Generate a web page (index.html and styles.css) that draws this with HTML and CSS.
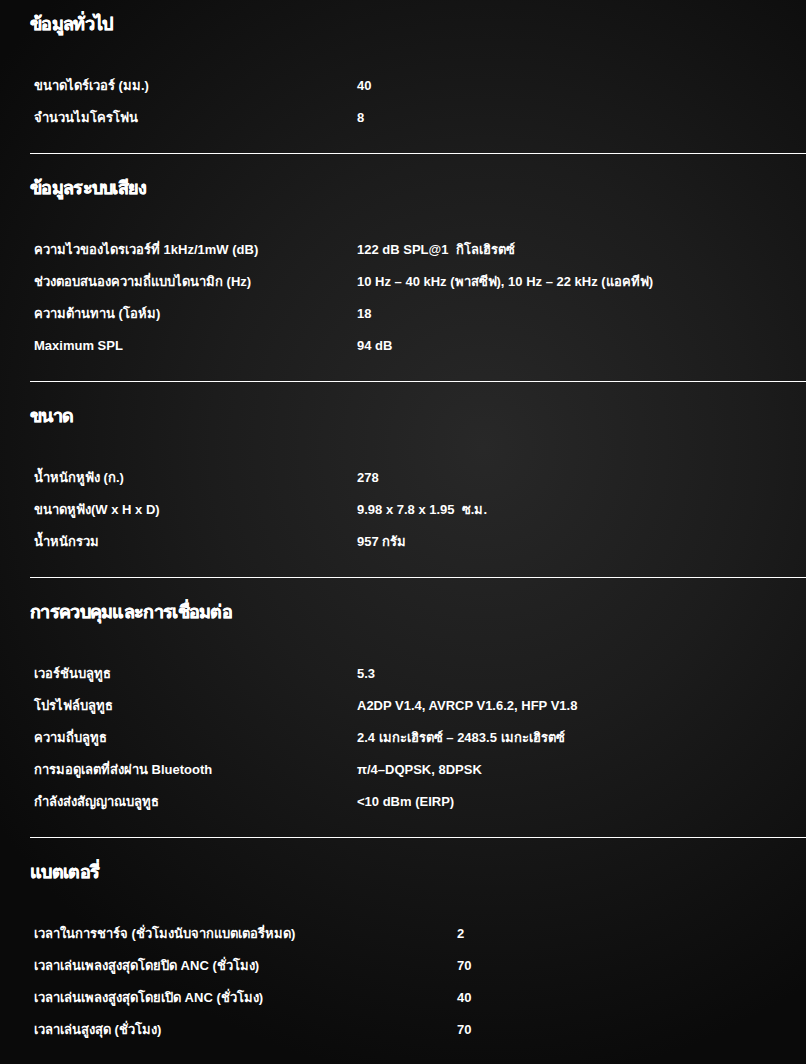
FILE: index.html
```html
<!DOCTYPE html>
<html lang="th">
<head>
    <meta charset="UTF-8">
    <meta name="viewport" content="width=device-width, initial-scale=1.0">
    <title>ข้อมูลจำเพาะ</title>
    <link rel="stylesheet" href="styles.css">
</head>
<body>
    <div class="specs">

        <!-- ข้อมูลทั่วไป -->
        <div class="spec-section">
            <h2>ข้อมูลทั่วไป</h2>
            <div class="spec-list">
                <div class="spec-row"><span class="label">ขนาดไดร์เวอร์ (มม.)</span><span class="value">40</span></div>
                <div class="spec-row"><span class="label">จำนวนไมโครโฟน</span><span class="value">8</span></div>
            </div>
        </div>

        <!-- ข้อมูลระบบเสียง -->
        <div class="spec-section">
            <h2>ข้อมูลระบบเสียง</h2>
            <div class="spec-list">
                <div class="spec-row"><span class="label">ความไวของไดรเวอร์ที่ 1kHz/1mW (dB)</span><span class="value">122 dB SPL@1&nbsp; กิโลเฮิรตซ์</span></div>
                <div class="spec-row"><span class="label">ช่วงตอบสนองความถี่แบบไดนามิก (Hz)</span><span class="value">10 Hz – 40 kHz (พาสซีฟ), 10 Hz – 22 kHz (แอคทีฟ)</span></div>
                <div class="spec-row"><span class="label">ความต้านทาน (โอห์ม)</span><span class="value">18</span></div>
                <div class="spec-row"><span class="label">Maximum SPL</span><span class="value">94 dB</span></div>
            </div>
        </div>

        <!-- ขนาด -->
        <div class="spec-section">
            <h2>ขนาด</h2>
            <div class="spec-list">
                <div class="spec-row"><span class="label">น้ำหนักหูฟัง (ก.)</span><span class="value">278</span></div>
                <div class="spec-row"><span class="label">ขนาดหูฟัง(W x H x D)</span><span class="value">9.98 x 7.8 x 1.95&nbsp; ซ.ม.</span></div>
                <div class="spec-row"><span class="label">น้ำหนักรวม</span><span class="value">957 กรัม</span></div>
            </div>
        </div>

        <!-- การควบคุมและการเชื่อมต่อ -->
        <div class="spec-section">
            <h2>การควบคุมและการเชื่อมต่อ</h2>
            <div class="spec-list">
                <div class="spec-row"><span class="label">เวอร์ชันบลูทูธ</span><span class="value">5.3</span></div>
                <div class="spec-row"><span class="label">โปรไฟล์บลูทูธ</span><span class="value">A2DP V1.4, AVRCP V1.6.2, HFP V1.8</span></div>
                <div class="spec-row"><span class="label">ความถี่บลูทูธ</span><span class="value">2.4 เมกะเฮิรตซ์ – 2483.5 เมกะเฮิรตซ์</span></div>
                <div class="spec-row"><span class="label">การมอดูเลตที่ส่งผ่าน Bluetooth</span><span class="value">π/4–DQPSK, 8DPSK</span></div>
                <div class="spec-row"><span class="label">กำลังส่งสัญญาณบลูทูธ</span><span class="value">&lt;10 dBm (EIRP)</span></div>
            </div>
        </div>

        <!-- แบตเตอรี่ -->
        <div class="spec-section last">
            <h2>แบตเตอรี่</h2>
            <div class="spec-list wide">
                <div class="spec-row"><span class="label">เวลาในการชาร์จ (ชั่วโมงนับจากแบตเตอรี่หมด)</span><span class="value">2</span></div>
                <div class="spec-row"><span class="label">เวลาเล่นเพลงสูงสุดโดยปิด ANC (ชั่วโมง)</span><span class="value">70</span></div>
                <div class="spec-row"><span class="label">เวลาเล่นเพลงสูงสุดโดยเปิด ANC (ชั่วโมง)</span><span class="value">40</span></div>
                <div class="spec-row"><span class="label">เวลาเล่นสูงสุด (ชั่วโมง)</span><span class="value">70</span></div>
            </div>
        </div>

    </div>
</body>
</html>
```

FILE: styles.css
```css
html, body {
    height: 100%;
}
body {
    margin: 0;
    padding: 0;
    font-family: "Liberation Sans", "Noto Sans", Arial, sans-serif;
    color: #fff;
    background-color: #0b0b0b;
    background-image: radial-gradient(ellipse 75% 60% at 60% 42%, #282828 0%, #1c1c1c 45%, #0a0a0a 100%);
    overflow: hidden;
}
.specs {
    padding: 12px 0 0 30px;
}
.spec-section {
    padding-top: 22px;
    padding-bottom: 20px;
    border-bottom: 1px solid #fff;
}
.spec-section:first-child {
    padding-top: 0;
}
.spec-section.last {
    border-bottom: none;
}
.spec-section h2 {
    margin: 0;
    font-size: 18px;
    line-height: 24px;
    font-weight: bold;
    letter-spacing: -0.7px;
    -webkit-text-stroke: 0.4px #fff;
}
.spec-list {
    margin-top: 33px;
    padding-left: 4px;
}
.spec-row {
    display: grid;
    grid-template-columns: 323px 1fr;
    height: 32px;
    align-items: center;
    font-size: 13px;
    font-weight: bold;
}
.spec-list.wide .spec-row {
    grid-template-columns: 423px 1fr;
}
```
